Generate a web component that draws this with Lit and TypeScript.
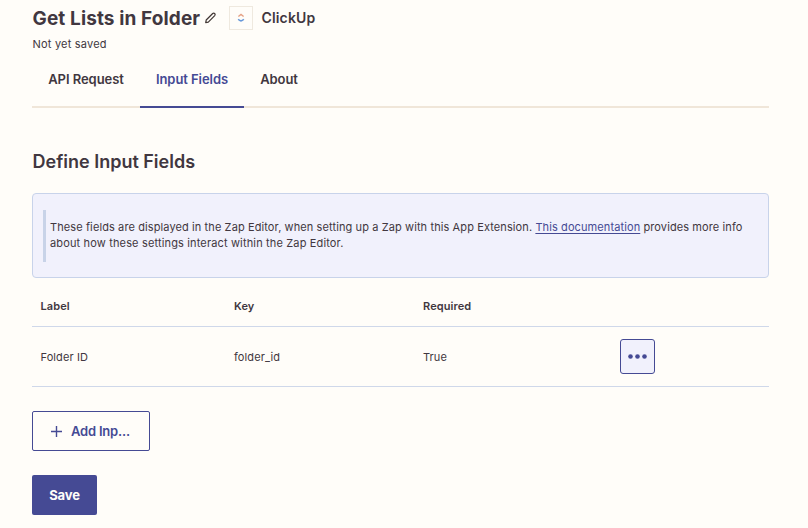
import { LitElement, html, css } from "lit";
import { customElement, state } from "lit/decorators.js";
import { classMap } from "lit/directives/class-map.js";

interface InputField {
  label: string;
  key: string;
  required: string;
}

@customElement("app-root")
export class AppRoot extends LitElement {
  static styles = css`
    :host {
      display: block;
      box-sizing: border-box;
      width: 808px;
      height: 528px;
      overflow: hidden;
      padding: 0 39px 0 32px;
      background: #fffdf9;
      color: #413740;
      font-family: Inter, "Liberation Sans", sans-serif;
    }
    * {
      box-sizing: border-box;
    }
    button {
      font: inherit;
      padding: 0;
      margin: 0;
    }
    h1,
    h2,
    p {
      margin: 0;
    }
    .header {
      display: flex;
      align-items: center;
      height: 36px;
    }
    .title {
      width: 171.5px;
      padding-left: 0.5px;
      font-size: 19px;
      font-weight: 650;
      letter-spacing: 0.12px;
      white-space: nowrap;
    }
    .pencil {
      display: block;
      width: 14px;
      height: 14px;
    }
    .app-icon {
      display: flex;
      align-items: center;
      justify-content: center;
      width: 24px;
      height: 24px;
      margin-left: 11.5px;
      border: 1px solid #efe9df;
    }
    .app-name {
      margin-left: 8.5px;
      font-size: 14px;
      font-weight: 570;
      line-height: 18px;
      letter-spacing: 0.15px;
    }
    .status {
      height: 16px;
      padding-left: 0.5px;
      line-height: 16px;
      font-size: 11px;
      letter-spacing: 0.2px;
    }
    .tabs {
      display: grid;
      grid-template-columns: 108px 104px 70px;
      height: 56px;
      background: linear-gradient(#f0e6d9, #f0e6d9) 0 54px / 100% 2px no-repeat;
    }
    .tab {
      height: 56px;
      padding: 2px 0 2px;
      border: 0;
      border-bottom: 2px solid transparent;
      background: none;
      color: inherit;
      font-size: 13px;
      font-weight: 570;
      letter-spacing: -0.06px;
      white-space: nowrap;
    }
    .tab.active {
      color: #454a94;
      border-bottom-color: #454a94;
    }
    .heading {
      height: 26px;
      margin-top: 41px;
      padding-left: 0.5px;
      line-height: 26px;
      font-size: 18px;
      font-weight: 580;
    }
    .notice {
      display: flex;
      align-items: center;
      height: 85px;
      margin-top: 18px;
      padding-left: 10px;
      border: 1px solid #c8d3ea;
      border-radius: 4px;
      background: #f1f1fc;
    }
    .notice-bar {
      width: 3px;
      height: 52px;
      margin-right: 4px;
      background: #c8d3e8;
    }
    .notice-text {
      padding-bottom: 2px;
      font-size: 11px;
      line-height: 16px;
      letter-spacing: 0.15px;
      white-space: nowrap;
    }
    .notice-lead {
      letter-spacing: 0.103px;
    }
    .link {
      color: #454a94;
      text-decoration: underline;
      text-underline-offset: 2px;
    }
    .row {
      display: grid;
      grid-template-columns: 193.5px 189px 196.5px 1fr;
      align-items: center;
      height: 60px;
      padding-left: 8.5px;
      border-bottom: 1px solid #cfd8ea;
      font-size: 11px;
      letter-spacing: 0.1px;
    }
    .row.head {
      height: 49px;
      padding-top: 8px;
      font-weight: 600;
    }
    .more {
      display: flex;
      align-items: center;
      justify-content: center;
      width: 35px;
      height: 35px;
      border: 1px solid #454a94;
      border-radius: 3px;
      background: #f1f1fc;
    }
    .add {
      display: flex;
      align-items: center;
      width: 118px;
      height: 40px;
      margin-top: 24px;
      padding-left: 18px;
      border: 1px solid #454a94;
      border-radius: 2px;
      background: #fffdf9;
      color: #454a94;
      font-size: 13px;
      font-weight: 570;
    }
    .add-label {
      margin-left: 9px;
      letter-spacing: -0.2px;
    }
    .save {
      display: block;
      width: 65px;
      height: 40px;
      margin-top: 24px;
      border: 0;
      border-radius: 2px;
      background: #454a94;
      color: #fffdf9;
      font-size: 13px;
      font-weight: 700;
      letter-spacing: -0.1px;
    }
    svg {
      display: block;
    }
  `;

  @state() private activeTab = "Input Fields";

  private tabs = ["API Request", "Input Fields", "About"];

  private fields: InputField[] = [
    { label: "Folder ID", key: "folder_id", required: "True" },
  ];

  render() {
    return html`
      <div class="header">
        <h1 class="title">Get Lists in Folder</h1>
        <svg class="pencil" viewBox="0 0 14 14" fill="none" stroke="#413735" stroke-width="1.2" stroke-linejoin="round">
          <path d="M1.7 11.7L2.2 9L8.7 2.5Q9.7 1.6 10.7 2.5Q11.6 3.5 10.7 4.6L4.3 11.1Z"></path>
        </svg>
        <div class="app-icon">
          <svg width="8" height="10" viewBox="0 0 8 10" fill="none" stroke-width="1.3">
            <path d="M1.4 3.6L4 1.4L6.6 3.6" stroke="#e5a184"></path>
            <path d="M1.2 6.3Q4 9.4 6.8 6.3" stroke="#6798da" stroke-width="1.6"></path>
          </svg>
        </div>
        <span class="app-name">ClickUp</span>
      </div>
      <p class="status">Not yet saved</p>
      <div class="tabs">
        ${this.tabs.map(
          (t) => html`<button
            class=${classMap({ tab: true, active: t === this.activeTab })}
            @click=${() => (this.activeTab = t)}
          >${t}</button>`
        )}
      </div>
      <h2 class="heading">Define Input Fields</h2>
      <div class="notice">
        <div class="notice-bar"></div>
        <p class="notice-text">
          <span class="notice-lead">These fields are displayed in the Zap Editor, when setting up a Zap with this App Extension.
          <a class="link">This documentation</a> provides more info</span><br />about how these settings
          interact within the Zap Editor.
        </p>
      </div>
      <div class="row head">
        <span>Label</span><span>Key</span><span>Required</span>
      </div>
      ${this.fields.map(
        (f) => html`<div class="row">
          <span>${f.label}</span><span>${f.key}</span><span>${f.required}</span>
          <button class="more" aria-label="More">
            <svg width="19" height="5" viewBox="0 0 19 5" fill="#454a94">
              <circle cx="2.5" cy="2.5" r="2.3"></circle>
              <circle cx="9.5" cy="2.5" r="2.3"></circle>
              <circle cx="16.5" cy="2.5" r="2.3"></circle>
            </svg>
          </button>
        </div>`
      )}
      <button class="add">
        <svg width="11" height="11" viewBox="0 0 11 11" stroke="#454a94" stroke-width="1.4">
          <path d="M5.5 0v11M0 5.5h11"></path>
        </svg>
        <span class="add-label">Add Inp...</span>
      </button>
      <button class="save">Save</button>
    `;
  }
}
